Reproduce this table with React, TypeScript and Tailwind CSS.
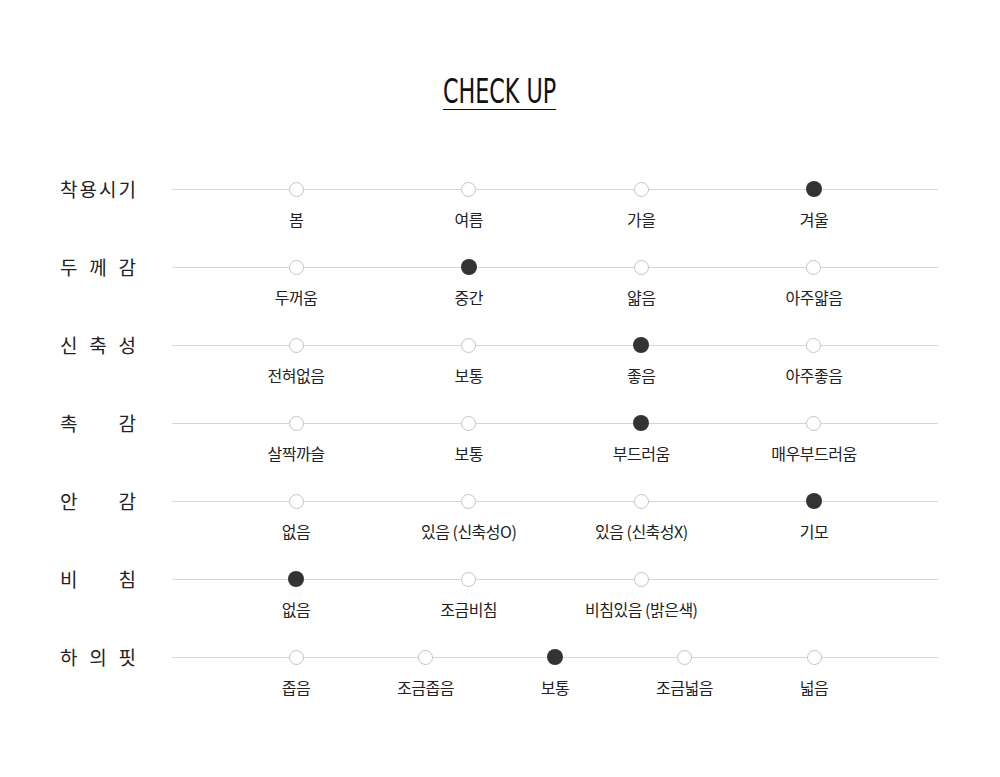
const rows = [
  { label: "착용시기", options: ["봄", "여름", "가을", "겨울"], active: 3 },
  { label: "두께감", options: ["두꺼움", "중간", "얇음", "아주얇음"], active: 1 },
  { label: "신축성", options: ["전혀없음", "보통", "좋음", "아주좋음"], active: 2 },
  { label: "촉감", options: ["살짝까슬", "보통", "부드러움", "매우부드러움"], active: 2 },
  { label: "안감", options: ["없음", "있음 (신축성O)", "있음 (신축성X)", "기모"], active: 3 },
  { label: "비침", options: ["없음", "조금비침", "비침있음 (밝은색)", ""], active: 0 },
  { label: "하의핏", options: ["좁음", "조금좁음", "보통", "조금넓음", "넓음"], active: 2 },
];

const kr = { fontFamily: '"Noto Sans CJK KR", "Noto Sans", sans-serif' };

function Row({ label, options, active }: { label: string; options: string[]; active: number }) {
  return (
    <div className="flex h-[78px]">
      <div className="flex h-5 w-[76px] items-center justify-between text-[19px] leading-5 text-[#222]">
        {label.split("").map((c, i) => (
          <span key={i}>{c}</span>
        ))}
      </div>
      <div className="relative ml-9 flex-1">
        <div className="absolute left-0 right-0 top-[10px] h-px bg-[#d6d6d6]" />
        <div className="relative flex justify-between px-16">
          {options.map((o, i) => (
            <div key={i} className="flex w-[120px] flex-col items-center">
              <div className="flex h-5 items-center">
                {o === "" ? null : i === active ? (
                  <span className="block h-4 w-4 rounded-full bg-[#333]" />
                ) : (
                  <span className="block h-[15px] w-[15px] rounded-full border border-[#c4c4c4] bg-white" />
                )}
              </div>
              <div className="mt-[10px] whitespace-nowrap text-[16px] leading-5 tracking-[-0.5px] text-[#222]">{o}</div>
            </div>
          ))}
        </div>
      </div>
    </div>
  );
}

export default function App() {
  return (
    <div className="min-h-[777px] w-[1000px] bg-white" style={kr}>
      <div className="flex justify-center pt-[74px]">
        <h1
          className="origin-center scale-x-[0.75] border-b-[1.5px] border-[#111] text-[33px] leading-[35px] text-[#111]"
          style={{ fontFamily: '"DejaVu Sans Condensed", "Liberation Sans", sans-serif' }}
        >
          CHECK UP
        </h1>
      </div>
      <div className="mt-[69px] pl-[60px] pr-[62px]">
        {rows.map((r) => (
          <Row key={r.label} {...r} />
        ))}
      </div>
    </div>
  );
}
